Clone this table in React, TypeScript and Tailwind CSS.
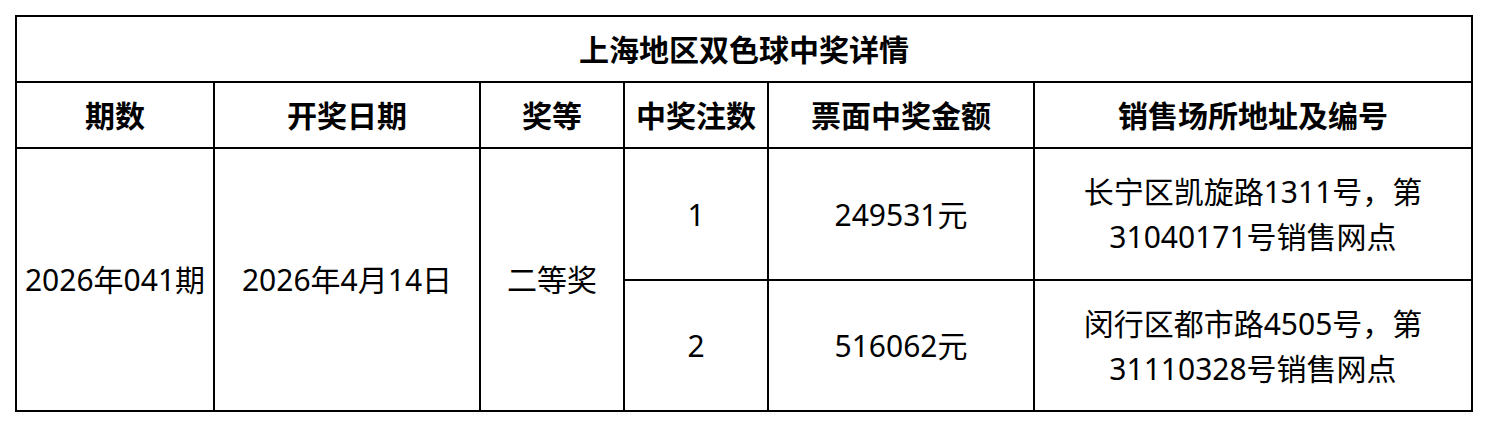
import React from "react";

const cell = "bg-white flex items-center justify-center text-center";

export default function App() {
  const font = { fontFamily: '"Noto Sans", "Noto Sans CJK SC", sans-serif' };
  return (
    <div className="p-[15px] bg-white w-full min-h-screen" style={font}>
      <div className="inline-grid grid-cols-[196px_264px_142px_142px_264px_436px] grid-rows-[64px_64px_130px_129px] gap-[2px] p-[2px] bg-black text-black text-[30px] leading-[45px]">
        <div className={`${cell} col-span-6 font-bold`}>上海地区双色球中奖详情</div>
        <div className={`${cell} font-bold`}>期数</div>
        <div className={`${cell} font-bold`}>开奖日期</div>
        <div className={`${cell} font-bold`}>奖等</div>
        <div className={`${cell} font-bold`}>中奖注数</div>
        <div className={`${cell} font-bold`}>票面中奖金额</div>
        <div className={`${cell} font-bold`}>销售场所地址及编号</div>
        <div className={`${cell} row-span-2`}>2026年041期</div>
        <div className={`${cell} row-span-2`}>2026年4月14日</div>
        <div className={`${cell} row-span-2`}>二等奖</div>
        <div className={cell}>1</div>
        <div className={cell}>249531元</div>
        <div className={cell}>
          <div>
            长宁区凯旋路1311号，第
            <br />
            31040171号销售网点
          </div>
        </div>
        <div className={cell}>2</div>
        <div className={cell}>516062元</div>
        <div className={cell}>
          <div>
            闵行区都市路4505号，第
            <br />
            31110328号销售网点
          </div>
        </div>
      </div>
    </div>
  );
}
